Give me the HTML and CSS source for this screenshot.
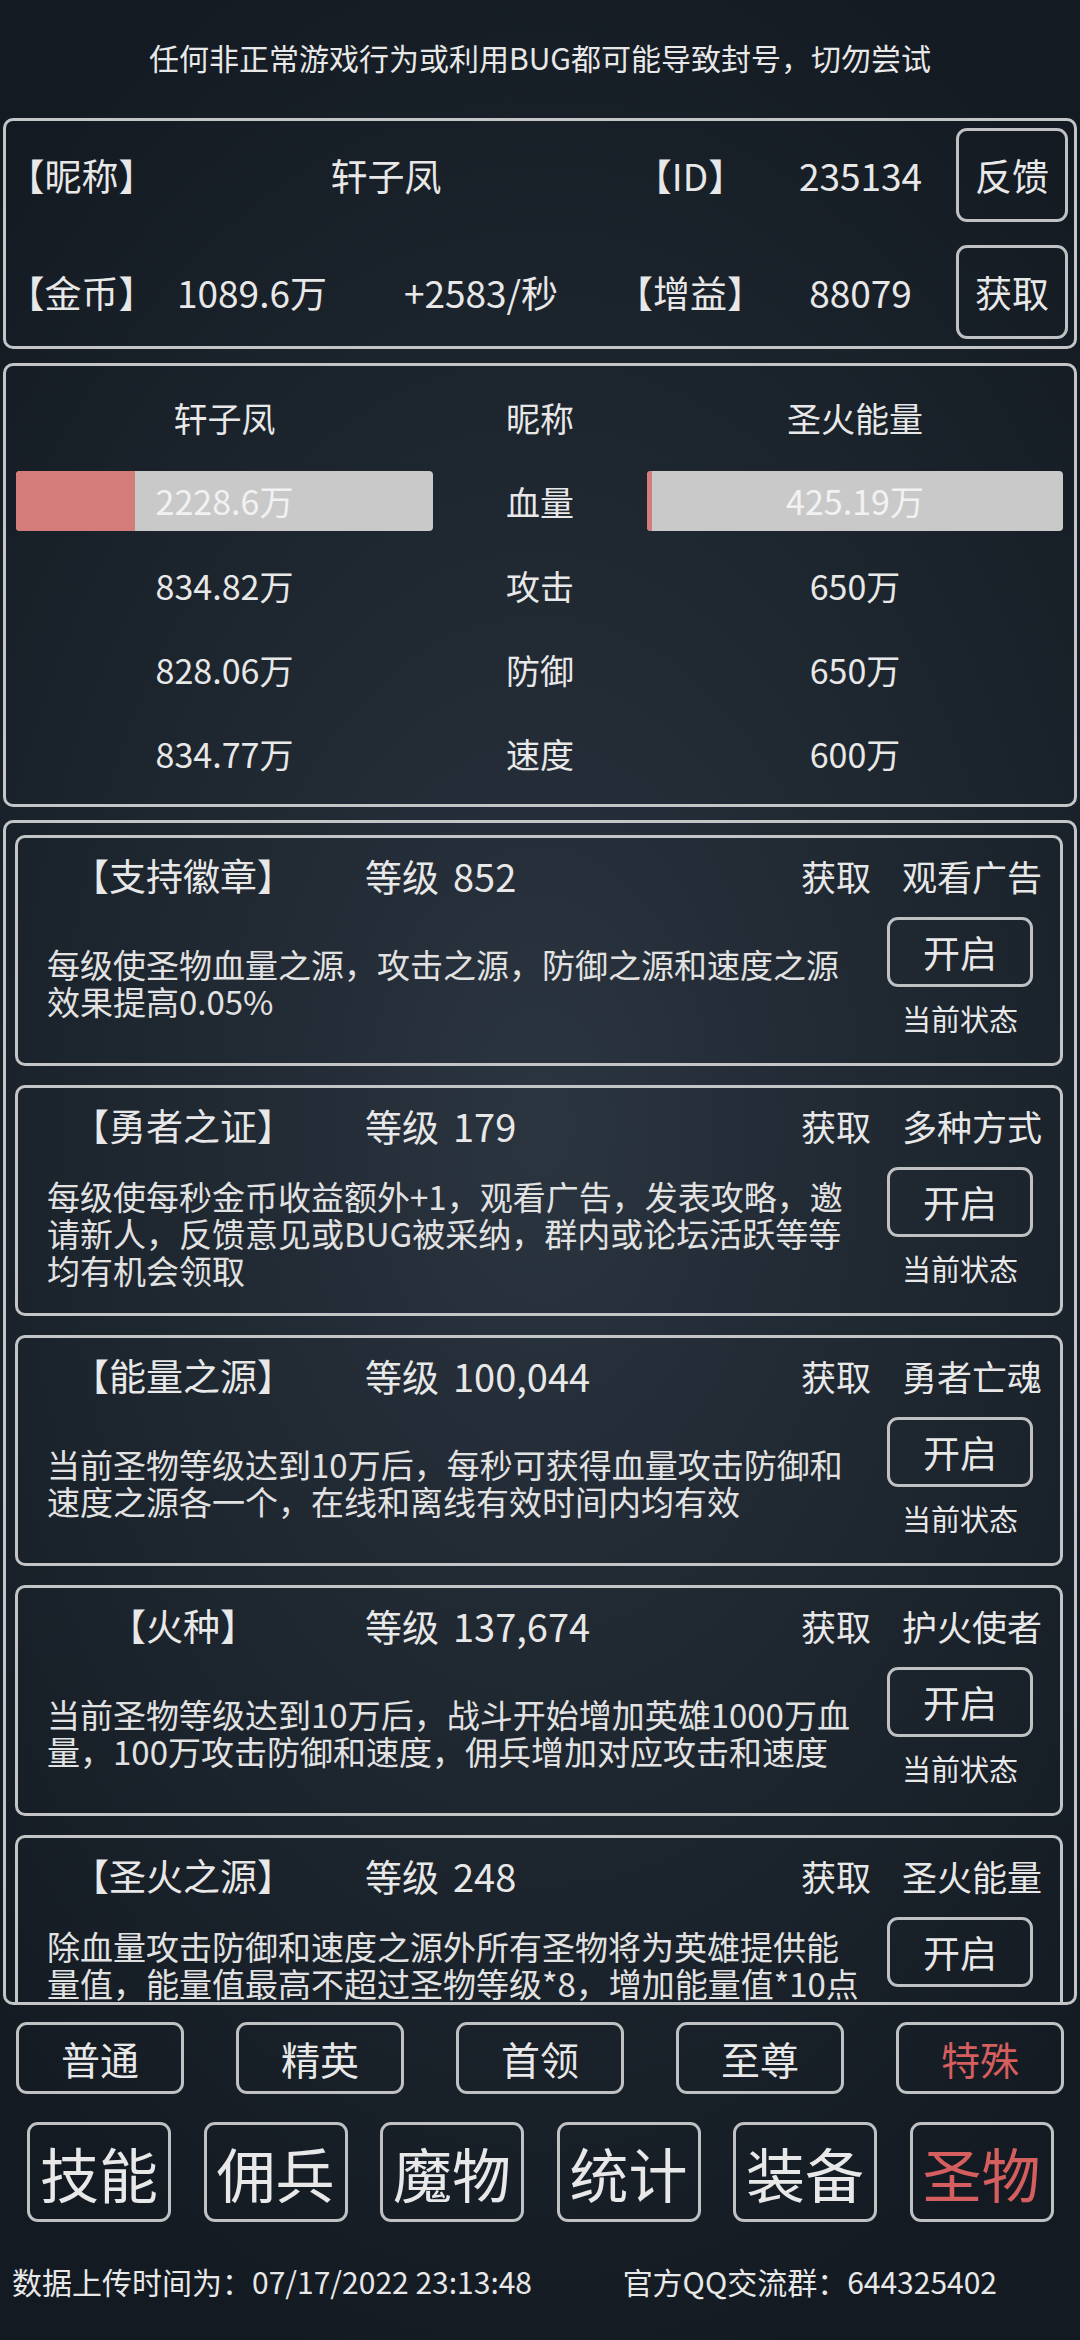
FILE: index.html
```html
<!DOCTYPE html>
<html lang="zh-CN">
<head>
    <meta charset="UTF-8">
    <meta name="viewport" content="width=1080, initial-scale=1.0">
    <title>圣物</title>
    <link rel="stylesheet" href="styles.css">
</head>
<body>
    <div class="notice">任何非正常游戏行为或利用BUG都可能导致封号，切勿尝试</div>

    <div class="panel info">
        <span class="lab">【昵称】</span>
        <span class="wide">轩子凤</span>
        <span class="lab">【ID】</span>
        <span>235134</span>
        <button class="btn small">反馈</button>

        <span class="lab">【金币】</span>
        <span>1089.6万</span>
        <span>+2583/秒</span>
        <span class="lab">【增益】</span>
        <span>88079</span>
        <button class="btn small">获取</button>
    </div>

    <div class="panel stats">
        <span>轩子凤</span><span>昵称</span><span>圣火能量</span>

        <div class="bar"><div class="fill" style="width: 28.5%"></div><span>2228.6万</span></div>
        <span>血量</span>
        <div class="bar"><div class="fill" style="width: 1.2%"></div><span>425.19万</span></div>

        <span>834.82万</span><span>攻击</span><span>650万</span>
        <span>828.06万</span><span>防御</span><span>650万</span>
        <span>834.77万</span><span>速度</span><span>600万</span>
    </div>

    <div class="panel list">
        <div class="item">
            <div class="item-head">
                <span class="name">【支持徽章】</span>
                <span class="level">等级<b>852</b></span>
                <span>获取</span>
                <span>观看广告</span>
            </div>
            <div class="item-body">
                <p class="desc">每级使圣物血量之源，攻击之源，防御之源和速度之源<br>效果提高0.05%</p>
                <div class="state">
                    <button class="btn open">开启</button>
                    <span>当前状态</span>
                </div>
            </div>
        </div>

        <div class="item">
            <div class="item-head">
                <span class="name">【勇者之证】</span>
                <span class="level">等级<b>179</b></span>
                <span>获取</span>
                <span>多种方式</span>
            </div>
            <div class="item-body">
                <p class="desc">每级使每秒金币收益额外+1，观看广告，发表攻略，邀<br>请新人，反馈意见或BUG被采纳，群内或论坛活跃等等<br>均有机会领取</p>
                <div class="state">
                    <button class="btn open">开启</button>
                    <span>当前状态</span>
                </div>
            </div>
        </div>

        <div class="item">
            <div class="item-head">
                <span class="name">【能量之源】</span>
                <span class="level">等级<b>100,044</b></span>
                <span>获取</span>
                <span>勇者亡魂</span>
            </div>
            <div class="item-body">
                <p class="desc">当前圣物等级达到10万后，每秒可获得血量攻击防御和<br>速度之源各一个，在线和离线有效时间内均有效</p>
                <div class="state">
                    <button class="btn open">开启</button>
                    <span>当前状态</span>
                </div>
            </div>
        </div>

        <div class="item">
            <div class="item-head">
                <span class="name">【火种】</span>
                <span class="level">等级<b>137,674</b></span>
                <span>获取</span>
                <span>护火使者</span>
            </div>
            <div class="item-body">
                <p class="desc">当前圣物等级达到10万后，战斗开始增加英雄1000万血<br>量，100万攻击防御和速度，佣兵增加对应攻击和速度</p>
                <div class="state">
                    <button class="btn open">开启</button>
                    <span>当前状态</span>
                </div>
            </div>
        </div>

        <div class="item">
            <div class="item-head">
                <span class="name">【圣火之源】</span>
                <span class="level">等级<b>248</b></span>
                <span>获取</span>
                <span>圣火能量</span>
            </div>
            <div class="item-body">
                <p class="desc">除血量攻击防御和速度之源外所有圣物将为英雄提供能<br>量值，能量值最高不超过圣物等级*8，增加能量值*10点<br>转换为血量，能量值为一点点的圣物加成的能量值</p>
                <div class="state">
                    <button class="btn open">开启</button>
                    <span>当前状态</span>
                </div>
            </div>
        </div>
    </div>

    <div class="grades">
        <button class="btn">普通</button>
        <button class="btn">精英</button>
        <button class="btn">首领</button>
        <button class="btn">至尊</button>
        <button class="btn active">特殊</button>
    </div>

    <div class="tabs">
        <button class="btn">技能</button>
        <button class="btn">佣兵</button>
        <button class="btn">魔物</button>
        <button class="btn">统计</button>
        <button class="btn">装备</button>
        <button class="btn active">圣物</button>
    </div>

    <div class="footer">
        <span>数据上传时间为：07/17/2022 23:13:48</span>
        <span class="qq">官方QQ交流群：644325402</span>
    </div>
</body>
</html>
```

FILE: styles.css
```css
body {
    margin: 0;
    width: 1080px;
    height: 2340px;
    overflow: hidden;
    font-family: "Noto Sans CJK SC", "Noto Sans", sans-serif;
    color: #e8e8e8;
    background: radial-gradient(ellipse 75% 55% at 50% 48%, #2b3540 0%, #1d252e 55%, #131a22 100%);
}
.notice {
    height: 114px;
    line-height: 114px;
    text-align: center;
    font-size: 30px;
}
.panel {
    box-sizing: border-box;
    margin: 0 3px;
    border: 3px solid #c3c5c7;
    border-radius: 10px;
}
.btn {
    box-sizing: border-box;
    margin: 0;
    padding: 0;
    background: transparent;
    border: 3px solid #bfc1c3;
    border-radius: 11px;
    color: #e8e8e8;
    font-family: inherit;
    cursor: pointer;
}
.btn.active {
    color: #d55e5e;
}

/* player info */
.info {
    margin-top: 4px;
    height: 231px;
    padding: 7px 6px 7px 0;
    display: grid;
    grid-template-columns: 151px 190px 268px 150px 191px 112px;
    grid-template-rows: 94px 94px;
    row-gap: 23px;
    align-items: center;
    text-align: center;
    font-size: 37px;
}
.info .wide {
    grid-column: span 2;
}
.info .lab {
    white-space: nowrap;
}
.btn.small {
    height: 94px;
    font-size: 37px;
}

/* stats compare */
.stats {
    margin-top: 14px;
    height: 444px;
    padding: 9px 11px 9px 10px;
    display: grid;
    grid-template-columns: 417px 214px 416px;
    grid-auto-rows: 84px;
    align-items: center;
    text-align: center;
    font-size: 34px;
}
.bar {
    position: relative;
    height: 60px;
    background: #c9c9c9;
    border-radius: 4px;
    overflow: hidden;
}
.bar .fill {
    height: 100%;
    background: #d47c7a;
}
.bar span {
    position: absolute;
    left: 0;
    right: 0;
    top: 0;
    line-height: 60px;
    color: #f2f2f2;
}

/* relic list */
.list {
    margin-top: 13px;
    height: 1185px;
    padding: 12px 11px 0 9px;
    overflow: hidden;
    display: flex;
    flex-direction: column;
    gap: 19px;
}
.item {
    box-sizing: border-box;
    flex: none;
    height: 231px;
    border: 3px solid #c3c5c7;
    border-radius: 10px;
    display: flex;
    flex-direction: column;
}
.item-head {
    height: 74px;
    display: grid;
    grid-template-columns: 330px 1fr 112px 160px;
    padding-right: 8px;
    align-items: center;
    font-size: 35px;
    white-space: nowrap;
}
.item-head span {
    text-align: center;
}
.item-head .name {
    font-size: 37px;
}
.item-head .level {
    text-align: left;
    padding-left: 17px;
    font-size: 37px;
}
.item-head .level b {
    font-weight: normal;
    margin-left: 14px;
    font-size: 38px;
}
.item-body {
    flex: 1;
    display: flex;
    padding: 0 27px 9px 29px;
}
.desc {
    flex: 1;
    align-self: center;
    margin: 0 27px 0 0;
    font-size: 33px;
    line-height: 37px;
    white-space: nowrap;
    color: #e2e2e2;
}
.state {
    width: 146px;
    margin-top: 5px;
    display: flex;
    flex-direction: column;
    align-items: center;
}
.btn.open {
    width: 146px;
    height: 70px;
    font-size: 37px;
}
.state span {
    margin-top: 11px;
    line-height: 40px;
    font-size: 29px;
}

/* bottom buttons */
.grades {
    margin-top: 17px;
    padding-left: 16px;
    display: flex;
    gap: 52px;
}
.grades .btn {
    width: 168px;
    height: 72px;
    font-size: 39px;
}
.tabs {
    margin-top: 28px;
    padding-left: 27px;
    display: flex;
    gap: 32.5px;
}
.tabs .btn {
    width: 144px;
    height: 100px;
    font-size: 59px;
    line-height: 1;
}
.footer {
    margin-top: 39px;
    line-height: 40px;
    font-size: 30px;
    padding-left: 12px;
    display: flex;
    white-space: nowrap;
}
.footer .qq {
    margin-left: auto;
    margin-right: 83px;
}
```
